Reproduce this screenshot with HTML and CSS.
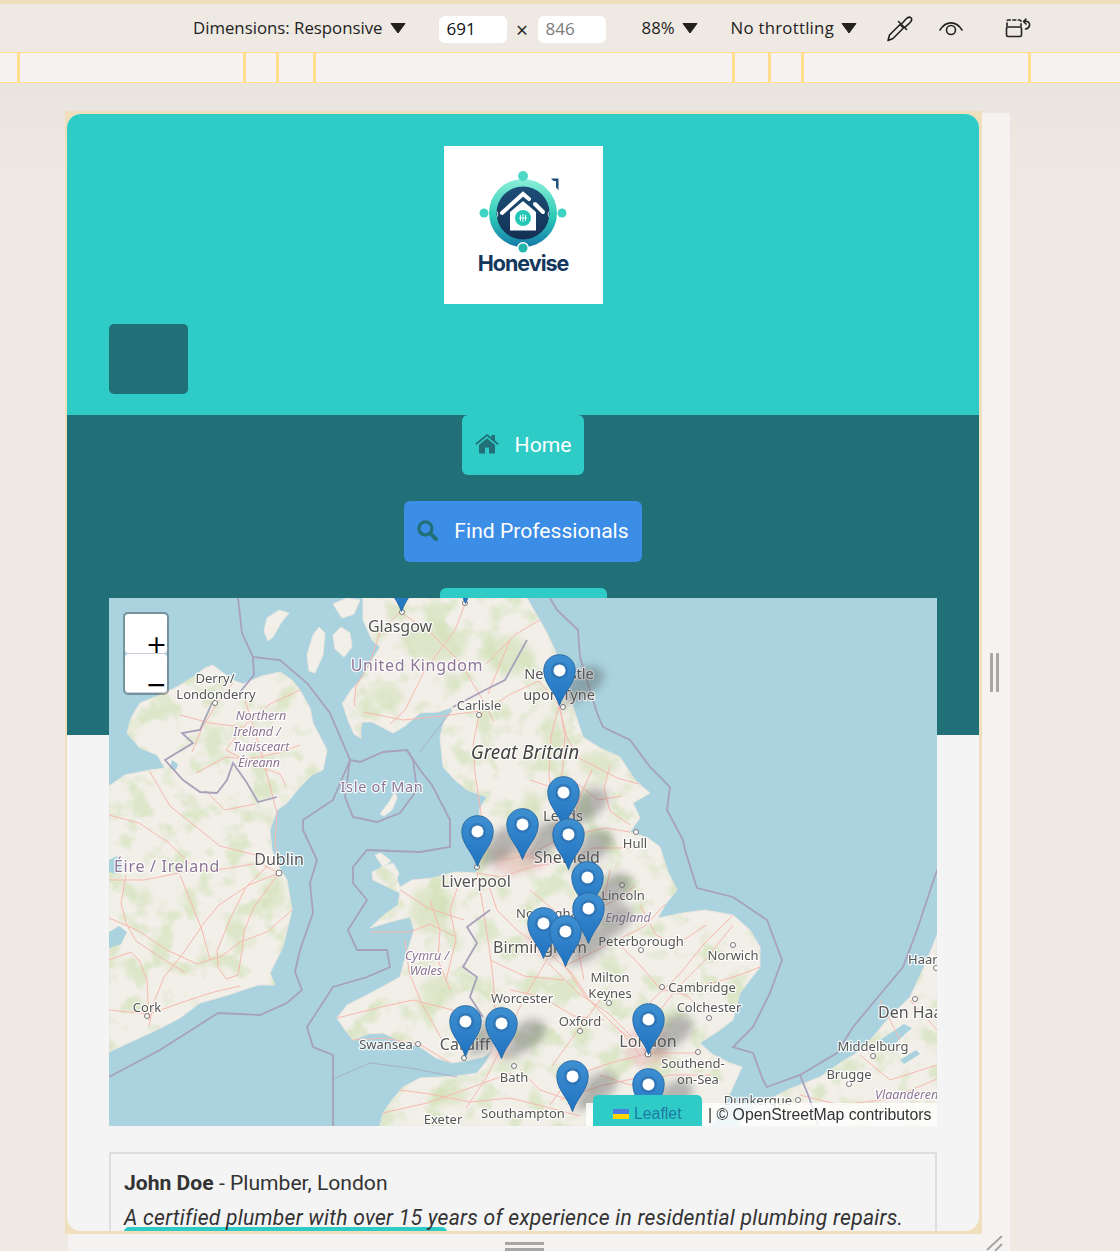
FILE: index.html
```html
<!DOCTYPE html>
<html lang="en">
<head>
  <meta charset="UTF-8">
  <title>Honevise - Find Professionals</title>
  <link rel="stylesheet" href="styles.css">
</head>
<body>

  <!-- Device toolbar -->
  <div class="toolbar">
    <span class="tool-label tool-dimensions">Dimensions: Responsive</span>
    <svg class="caret" viewBox="0 0 16 12"><path d="M1 1.500h14L8 11z"/></svg>
    <span class="size-box size-width">691</span>
    <span class="times">×</span>
    <span class="size-box size-height">846</span>
    <span class="tool-label tool-zoom">88%</span>
    <svg class="caret" viewBox="0 0 16 12"><path d="M1 1.500h14L8 11z"/></svg>
    <span class="tool-label tool-throttle">No throttling</span>
    <svg class="caret" viewBox="0 0 16 12"><path d="M1 1.500h14L8 11z"/></svg>
    <svg class="tool-icon icon-dropper" viewBox="0 0 27 28">
      <path d="M2 26.500l1.500-5.500L14 10.500l3.500 3.500L7 24.500z"/>
      <path d="M12.500 7.500l8 8M15.500 10l4.500-5c1.500-1.500 3.500-2.500 5-1.200 1.300 1.500.3 3.500-1.200 5l-5 4.500"/>
    </svg>
    <svg class="tool-icon icon-eye" viewBox="0 0 24 18">
      <path d="M1 11C7 1.500 17 1.500 23 11"/>
      <circle cx="12" cy="11" r="4.500"/>
    </svg>
    <svg class="tool-icon icon-rotate" viewBox="0 0 26 20">
      <path d="M2 8V3.500c0-1 .6-1.500 1.500-1.500h11c1 0 1.500.6 1.500 1.500V8" stroke-dasharray="3 2.500"/>
      <rect x="1.500" y="9" width="15" height="9.500" rx="1.500"/>
      <path d="M19 3.500c4-1 6 1.500 5.500 4-.4 2-2 3.200-4 3.500M21 1l-2.500 2.500L21 6"/>
    </svg>
  </div>

  <!-- Media query ruler -->
  <div class="ruler">
    <span class="ruler-cell cell-a"></span>
    <span class="ruler-cell cell-b"></span>
    <span class="ruler-cell cell-c"></span>
    <span class="ruler-cell cell-d"></span>
    <span class="ruler-cell cell-e"></span>
    <span class="ruler-cell cell-f"></span>
    <span class="ruler-cell cell-g"></span>
    <span class="ruler-cell cell-h"></span>
    <span class="ruler-cell cell-rest"></span>
  </div>

  <div class="stage">
    <div class="device-frame">
      <div class="site">

        <header class="site-header">
          <div class="logo">
            <svg class="logo-mark" viewBox="0 0 100 90">
              <defs>
                <linearGradient id="ringGrad" x1="0" y1="0" x2="0" y2="1">
                  <stop offset="0" stop-color="#8ceed8"/>
                  <stop offset=".55" stop-color="#2ccbb8"/>
                  <stop offset="1" stop-color="#1678a8"/>
                </linearGradient>
                <linearGradient id="coreGrad" x1="0" y1="0" x2="0" y2="1">
                  <stop offset="0" stop-color="#1d4f78"/>
                  <stop offset="1" stop-color="#142f52"/>
                </linearGradient>
              </defs>
              <circle cx="50" cy="43" r="34" fill="url(#ringGrad)"/>
              <circle cx="50" cy="43" r="26.500" fill="url(#coreGrad)"/>
              <path d="M23 41c3 1 3 5 0 7 2-3 2-5 0-7zM77 41c-3 1-3 5 0 7-2-3-2-5 0-7z" fill="#ffffff"/>
              <circle cx="50" cy="6" r="5" fill="#4fd8c6"/>
              <circle cx="11" cy="43" r="4.500" fill="#3ed3c2"/>
              <circle cx="89" cy="43" r="4.500" fill="#3ed3c2"/>
              <circle cx="50" cy="78" r="6" fill="#ffffff"/>
              <circle cx="50" cy="78" r="4.500" fill="#22b6ae"/>
              <path d="M78 8.500h7.500V20L83 17.500V11h-2.500z" fill="#1d4f78"/>
              <path d="M29 43L50 24l6 5" fill="none" stroke="#ffffff" stroke-width="4" stroke-linecap="round"/>
              <path d="M62 34l8 8" fill="none" stroke="#ffffff" stroke-width="4" stroke-linecap="round"/>
              <path d="M50 31l13 11v18.500H37V42z" fill="#ffffff"/>
              <circle cx="50" cy="48" r="8" fill="#25c8b6"/>
              <path d="M46 48h8M50 44v8M47.500 45v6M52.500 45v6" stroke="#ffffff" stroke-width=".9"/>
            </svg>
            <span class="logo-text">Honevise</span>
          </div>
          <button class="burger" type="button" aria-label="Menu"></button>
        </header>

        <nav class="site-nav">
          <a class="nav-btn nav-home" href="#">
            <svg class="nav-icon icon-home" viewBox="0 0 24 20"><path d="M12 4.300L4 11v7.500c0 .6.400 1 1 1h5v-6h4v6h5c.6 0 1-.4 1-1V11zM23.700 9.500L20 6.400V1h-3.500v2.500L12 0 .3 9.500l1.100 1.400L12 2.200l10.600 8.700z"/></svg>
            <span>Home</span>
          </a>
          <a class="nav-btn nav-find" href="#">
            <svg class="nav-icon icon-search" viewBox="0 0 22 22"><circle cx="8.800" cy="8.800" r="6.800" fill="none" stroke-width="3.400"/><path d="M14 14l6 6" stroke-width="4" stroke-linecap="round"/></svg>
            <span>Find Professionals</span>
          </a>
          <a class="nav-btn nav-third" href="#"></a>
        </nav>

        <main class="content">
          <div class="map">
            <svg class="map-canvas" viewBox="109 598 828 528" preserveAspectRatio="none">
              <defs>
                <linearGradient id="pinGrad" x1="0" y1="0" x2="0" y2="1">
                  <stop offset="0" stop-color="#3f90d2"/>
                  <stop offset="1" stop-color="#1f72c0"/>
                </linearGradient>
                <symbol id="pin" viewBox="0 0 33 52" overflow="visible">
                  <path d="M16.500 51.500C11 36 1 30 .8 16.500.8 7.500 7.500.7 16.500.7s15.700 6.800 15.700 15.800C32 30 22 36 16.500 51.500z" fill="url(#pinGrad)" stroke="#2b6ba3"/>
                  <circle cx="16.500" cy="16.500" r="8.500" fill="#2a6aa5" opacity=".55"/>
                  <circle cx="16.500" cy="16.500" r="6" fill="#ffffff"/>
                </symbol>
                <symbol id="pinShadow" viewBox="0 0 60 52" overflow="visible">
                  <path d="M2 52C6 40 10 26 18 18c8-8 22-8 26 0 4 10-8 20-18 26-8 4-16 6-24 8z" fill="#5a5c5c"/>
                </symbol>
                <path id="landIreland" d="M109 786L125 775 150 770 165 768 157 755 140 748 127 733 131 718 140 703 160 695 177 687 193 677 205 668 213 665 222 672 233 680 243 684 262 676 280 672 292 680 300 690 310 708 313 723 327 750 323 770 312 775 300 787 287 803 277 810 270 830 272 850 278 865 287 880 292 910 283 947 270 973 275 985 258 985 243 990 225 996 200 1003 180 1018 163 1027 135 1040 109 1052z"/>
                <path id="landBritain" d="M363 598L363 620 372 640 380 647 372 660 363 677 351 690 343 703 350 722 360 737 362 722 372 722 393 733 405 726 420 713 438 712 453 707 444 722 440 737 443 767 455 780 467 790 487 797 480 808 478 825 482 840 476 855 477 873 455 872 433 878 412 880 400 887 395 874 383 867 372 872 373 880 388 887 400 893 398 905 385 914 370 928 390 922 410 917 414 930 410 943 404 962 400 977 380 988 363 997 347 1005 337 1018 345 1030 353 1040 368 1034 383 1033 400 1041 420 1047 436 1058 453 1063 470 1060 483 1057 493 1050 486 1062 477 1073 458 1076 440 1077 420 1078 403 1087 392 1100 383 1113 380 1126 710 1126 727 1100 742 1067 730 1063 712 1054 700 1043 720 1030 733 1020 740 993 760 967 760 947 750 930 733 915 705 910 683 913 658 918 665 905 677 890 668 872 660 847 648 838 630 832 640 818 633 803 650 793 635 780 620 757 600 748 583 737 573 707 562 675 555 650 547 633 535 612 527 598z"/>
                <path id="landLowlands" d="M937 935L925 965 910 997 887 1020 873 1037 858 1052 840 1063 820 1077 787 1090 763 1103 745 1115 738 1126 937 1126z"/>
                <clipPath id="landClip">
                  <use href="#landIreland"/>
                  <use href="#landBritain"/>
                  <use href="#landLowlands"/>
                </clipPath>
                <filter id="mottle" x="0" y="0" width="100%" height="100%" color-interpolation-filters="sRGB">
                  <feTurbulence type="fractalNoise" baseFrequency=".04" numOctaves="3" seed="7"/>
                  <feColorMatrix values="0 0 0 0 .78  0 0 0 0 .87  0 0 0 0 .66  5 0 0 0 -2.500"/>
                </filter>
              </defs>

              <g class="tiles">
                <!-- sea -->
                <rect class="sea" x="109" y="598" width="828" height="528"/>

                <!-- land -->
                <use class="land" href="#landIreland"/>
                <use class="land" href="#landBritain"/>
                <use class="land" href="#landLowlands"/>
                <path class="land" d="M381 867l12-4 6 10-4 12-12-3-6-8zM383 867l-8-12 6-2 10 8z"/>
                <path class="land" d="M380 814l9-12 6-10 2 6-5 12-8 6z"/>
                <path class="land" d="M267 618l12-8 10 3-8 10-8 14-5 4-4-10zM307 655l6-20 6-8 6 6-2 22-8 18-6-2zM333 635l8-8 9 6 2 14-8 10-9-8zM333 604l14-6 13 2-6 14-12 4-4-6z"/>
                <path class="land" d="M342 702l10 6 8 14 1 16-7-4-6-14z"/>

                <!-- parks and hills -->
                <rect class="mottle" x="109" y="598" width="828" height="528" filter="url(#mottle)" clip-path="url(#landClip)"/>
                <g class="green">
                  <path d="M400 630l40-8 30 14-8 22-30 4-26-10zM485 640l30-6 22 20-18 22-28-6z"/>
                  <path d="M370 690l22-8 14 16-16 12-16-6zM445 670l14 8-2 16-12-4z"/>
                  <path d="M545 715l16 6 2 26-14 8-8-22zM580 755l24-4 16 14-14 14-26-8z"/>
                  <path d="M525 790l14 4 4 26-12 2-8-14zM518 910l14-8 2 14-14 6z"/>
                  <path d="M415 890l24-8 18 20-12 28-22 4-14-18zM420 985l22-12 16 14-12 18-20 2z"/>
                  <path d="M262 885l20-8 4 26-16 8-10-10zM133 895l14-8 6 12-12 10z"/>
                  <path d="M430 1090l24-6 16 8-8 12-24 2zM840 1105l18-6 8 10-18 4z"/>
                </g>

                <!-- lakes -->
                <path class="lake" d="M109 860l8-4 6 10-6 8-8-2zM109 932l10-6 8 6-6 12-12 4zM172 760l6 4-2 6-6-2zM880 1040l24-16 8 4-20 18zM900 1060l16-10 4 4-16 10z"/>

                <!-- roads -->
                <g class="roads">
                  <path d="M109 880h35l40-8 40-3 35-6 20 10M279 873l-30 12-30 20-15 18-22 32-18 22-10 25-5 24M279 873l-25 34-10 24-2 20-4 24-12 4-8-12-1-16 14-34 15-30 33-32M292 910l-25 22-27 10-18 14-25 8-30-14-30-20-28-12-10 4M109 960l22-8 8 8 8 20 2 40M109 1010l40 4 40-14 25-8 26-6M126 875l-5 28 5 20 10 18 30 20 20 12M180 875l10 25 12 30 8 30"/>
                  <path d="M233 683l-16 20-15 25-10 24M300 690l-30 14-24 20-20 26 26 14 28 10 6 12M300 745l-22 8-30 6-22-2-30 16M245 700l14 45 8 30 10 38-2 30 3 20M180 715l30 8 32 4M109 815l30 8 30 20 30 30M150 772l20 34 30 24 20 16 40 10M205 790l20 20 30-6"/>
                  <path d="M400 612l-20 20-10 30-14 24-2 20M400 612l30 20 30 30 24 40 10 20M465 604l-10 26-30 40-20 40-15 14M363 712l40 8 40-4 36-5M479 715l-6 30 2 28 6 40 2 20M479 715l30-20 30-14 20 24 6 30-2 30-4 25M559 706l-8 30-2 40 6 40M559 706l8 32 12 20 38 20 22 6M500 860l26-4 40-20 40-8 24 4M633 848l-40 0-30 14-45-6M510 640l-10 24-12 30M540 620l-24 14-30 30M592 770l-12 26-6 24M610 765l-6 24 6 22 20 14M530 780l24 8 24-4 20 16 24-4"/>
                  <path d="M477 873l24 4 30-10 35-6M487 880l10 30 20 20 30 22 24 20 20 30 30 30 20 24M477 873l6 34 6 40 4 30 2 30 6 24M548 958l-24 40-18 40-20 40-20 30M565 966l20 30 30 30 32 27M565 966l40-20 40-20 20-22M587 913l-20 45M587 913l36-16 12-12M700 1053l-50 0-40 10-40 14-20 28M648 1053l-40-40-30-20-30-30M648 1053l10-40 20-26 30-30 25-32M733 915l-30 30-24 30-28 26-3 50M760 967l-26 10-30 8-26 8M620 945l20 20 20 24 26 6 20 18M600 1000l-22 30-26 36M510 990l30 6 34 20 30 4M490 960l34 16 40 4M530 890l24 20 24 40 6 30M610 870l-6 30-18 40M640 905l16 30 20 10 30-20M600 1075l30 10 40-10 40 0M560 1100l40-14 46-10M520 1070l20 20 30 10"/>
                  <path d="M400 890l28 18 36 12M370 932l40 0 20-8 24 12M337 1018l40-10 36-8 40 10 30 6M353 1040l30-2 36 6 30 18M405 940l4 32 12 30 20 36M400 1090l30 4 40 8 40-4 40 10 30 8M383 1113l44-10 40-14 44-16M430 900l10 30-2 30 12 30M460 880l-10 30 6 30-10 40"/>
                  <path d="M880 1000l20 40M800 1095l40 10 50-6 47-20M860 1055l30 25 47-15M910 1000l27 30"/>
                </g>

                <!-- urban patches -->
                <path class="urban" d="M495 848l30 0 24 8-6 12-30 8-20-6zM530 925l30 0 8 24-20 10-22-10zM630 1030l34 0 6 30-30 8-16-14zM555 820l22 6-4 18-20 0zM490 1048l18 0 2 10-20 2z"/>

                <!-- borders and sea limits -->
                <g class="limits">
                  <path d="M238 598L242 633 253 657 280 660 307 683 330 713 350 760 360 762 383 752 407 750 420 770 432 785 450 820 450 847 420 852 392 851 367 850 353 867 353 883 367 900 348 930 357 950 387 950 390 967 367 977 333 987 307 1027 313 1047 333 1055 333 1126"/>
                  <path d="M350 760L345 797 353 817 377 822 400 813 417 790 413 760 407 750"/>
                  <path d="M350 760L333 800 303 820 303 830 317 860 310 883 313 913 300 950 295 972 302 990 287 1003 260 1015 218 1013 160 1050 109 1077"/>
                  <path d="M253 657L254 675 240 692"/>
                  <path d="M550 598L557 610 578 630 580 657 597 713 603 727 630 740 650 767 670 787 667 810 683 840 685 850 697 888 733 897 767 920 782 960 770 993 753 1027 733 1047 753 1053 763 1080 767 1087 800 1075 810 1100 818 1126"/>
                  <path d="M937 870L917 930 903 967 878 997 853 1027 837 1053 800 1075"/>
                  <path d="M212 703L200 730 182 733 193 743 165 760 183 780 200 792 217 793 227 780 233 763 247 783 258 802 277 797"/>
                  <path d="M490 910L467 927 477 943 463 967 477 977 470 997 483 1017"/>
                  <path class="thin" d="M333 1079L370 1063 410 1068 457 1077M420 752l32-42"/>
                  <path d="M527 640L505 680 485 690 453 707"/>
                </g>

                <!-- place dots -->
                <g class="dots">
                  <circle cx="215" cy="703" r="2.500"/><circle cx="479" cy="715" r="2.500"/><circle cx="636" cy="832" r="2.500"/>
                  <circle cx="622" cy="885" r="2.500"/><circle cx="641" cy="950" r="2.500"/><circle cx="733" cy="945" r="2.500"/>
                  <circle cx="662" cy="987" r="2.500"/><circle cx="709" cy="1018" r="2.500"/><circle cx="609" cy="1003" r="2.500"/>
                  <circle cx="580" cy="1031" r="2.500"/><circle cx="698" cy="1052" r="2.500"/><circle cx="147" cy="1016" r="2.500"/>
                  <circle cx="418" cy="1044" r="2.500"/><circle cx="514" cy="1066" r="2.500"/><circle cx="915" cy="999" r="2.500"/>
                  <circle cx="873" cy="1056" r="2.500"/><circle cx="849" cy="1084" r="2.500"/><circle cx="798" cy="1100" r="2.500"/>
                  <circle cx="279" cy="873" r="3"/><circle cx="648" cy="1054" r="3"/><circle cx="477" cy="867" r="2.500"/>
                  <circle cx="563" cy="707" r="2.500"/><circle cx="402" cy="612" r="2.500"/><circle cx="465" cy="603" r="2.500"/>
                  <circle cx="936" cy="968" r="2.500"/><circle cx="464" cy="1058" r="2.500"/>
                </g>

                <!-- place labels -->
                <g class="labels">
                  <text class="city big" x="400" y="632">Glasgow</text>
                  <text class="region big" x="417" y="671">United Kingdom</text>
                  <text class="city" x="215" y="683">Derry/</text>
                  <text class="city" x="216" y="699">Londonderry</text>
                  <text class="region-it" x="261" y="720">Northern</text>
                  <text class="region-it" x="257" y="736">Ireland /</text>
                  <text class="region-it" x="261" y="751">Tuaisceart</text>
                  <text class="region-it" x="259" y="767">Éireann</text>
                  <text class="city mid" x="559" y="679">Newcastle</text>
                  <text class="city mid" x="559" y="700">upon Tyne</text>
                  <text class="city" x="479" y="710">Carlisle</text>
                  <text class="nation" x="525" y="759">Great Britain</text>
                  <text class="region mid" x="382" y="792">Isle of Man</text>
                  <text class="city big" x="279" y="865">Dublin</text>
                  <text class="region big" x="167" y="872">Éire / Ireland</text>
                  <text class="city mid" x="563" y="821">Leeds</text>
                  <text class="city" x="635" y="848">Hull</text>
                  <text class="city big" x="567" y="863">Sheffield</text>
                  <text class="city big" x="476" y="887">Liverpool</text>
                  <text class="city" x="623" y="900">Lincoln</text>
                  <text class="region-it" x="628" y="922">England</text>
                  <text class="city" x="553" y="918">Nottingham</text>
                  <text class="city" x="641" y="946">Peterborough</text>
                  <text class="city big" x="540" y="953">Birmingham</text>
                  <text class="city" x="733" y="960">Norwich</text>
                  <text class="city start" x="908" y="964">Haarlem</text>
                  <text class="region-it" x="427" y="960">Cymru /</text>
                  <text class="region-it" x="426" y="975">Wales</text>
                  <text class="city" x="147" y="1012">Cork</text>
                  <text class="city" x="610" y="982">Milton</text>
                  <text class="city" x="610" y="998">Keynes</text>
                  <text class="city" x="702" y="992">Cambridge</text>
                  <text class="city" x="709" y="1012">Colchester</text>
                  <text class="city" x="522" y="1003">Worcester</text>
                  <text class="city" x="580" y="1026">Oxford</text>
                  <text class="city big start" x="878" y="1018">Den Haag</text>
                  <text class="city" x="873" y="1051">Middelburg</text>
                  <text class="city" x="386" y="1049">Swansea</text>
                  <text class="city big" x="465" y="1050">Cardiff</text>
                  <text class="city big" x="648" y="1047">London</text>
                  <text class="city" x="693" y="1068">Southend-</text>
                  <text class="city" x="698" y="1084">on-Sea</text>
                  <text class="city" x="514" y="1082">Bath</text>
                  <text class="city" x="849" y="1079">Brugge</text>
                  <text class="region-it start" x="875" y="1099">Vlaanderen</text>
                  <text class="city" x="758" y="1105">Dunkerque</text>
                  <text class="city" x="443" y="1124">Exeter</text>
                  <text class="city" x="523" y="1118">Southampton</text>
                </g>
              </g>

              <!-- marker shadows -->
              <g class="pin-shadows">
                <use href="#pinShadow" x="559" y="654" width="60" height="52"/>
                <use href="#pinShadow" x="563" y="776" width="60" height="52"/>
                <use href="#pinShadow" x="568" y="818" width="60" height="52"/>
                <use href="#pinShadow" x="477" y="815" width="60" height="52"/>
                <use href="#pinShadow" x="522" y="808" width="60" height="52"/>
                <use href="#pinShadow" x="587" y="861" width="60" height="52"/>
                <use href="#pinShadow" x="588" y="892" width="60" height="52"/>
                <use href="#pinShadow" x="543" y="907" width="60" height="52"/>
                <use href="#pinShadow" x="565" y="915" width="60" height="52"/>
                <use href="#pinShadow" x="465" y="1005" width="60" height="52"/>
                <use href="#pinShadow" x="501" y="1007" width="60" height="52"/>
                <use href="#pinShadow" x="648" y="1003" width="60" height="52"/>
                <use href="#pinShadow" x="572" y="1060" width="60" height="52"/>
                <use href="#pinShadow" x="648" y="1068" width="60" height="52"/>
              </g>

              <!-- markers -->
              <use href="#pin" x="385" y="560" width="33" height="52"/>
              <use href="#pin" x="449" y="552" width="33" height="52"/>
              <use href="#pin" x="543" y="654" width="33" height="52"/>
              <use href="#pin" x="547" y="776" width="33" height="52"/>
              <use href="#pin" x="461" y="815" width="33" height="52"/>
              <use href="#pin" x="506" y="808" width="33" height="52"/>
              <use href="#pin" x="552" y="818" width="33" height="52"/>
              <use href="#pin" x="571" y="861" width="33" height="52"/>
              <use href="#pin" x="572" y="892" width="33" height="52"/>
              <use href="#pin" x="527" y="907" width="33" height="52"/>
              <use href="#pin" x="549" y="915" width="33" height="52"/>
              <use href="#pin" x="449" y="1005" width="33" height="52"/>
              <use href="#pin" x="485" y="1007" width="33" height="52"/>
              <use href="#pin" x="632" y="1003" width="33" height="52"/>
              <use href="#pin" x="556" y="1060" width="33" height="52"/>
              <use href="#pin" x="632" y="1068" width="33" height="52"/>
            </svg>

            <div class="zoom-control">
              <a class="zoom-btn" href="#">+</a>
              <a class="zoom-btn" href="#">−</a>
            </div>

            <div class="attribution">
              <a class="leaflet-link" href="#">
                <svg class="flag" viewBox="0 0 16 10"><rect width="16" height="5" fill="#4c7be1"/><rect y="5" width="16" height="5" fill="#ffd500"/></svg>
                Leaflet
              </a>
              <span class="attr-text">| © OpenStreetMap contributors</span>
            </div>
          </div>

          <div class="pro-card">
            <p class="pro-name"><strong>John Doe</strong> - Plumber, London</p>
            <p class="pro-bio"><em>A certified plumber with over 15 years of experience in residential plumbing repairs.</em></p>
            <a class="pro-action" href="#"></a>
          </div>
        </main>

      </div>
    </div>

    <div class="handle-right">
      <span class="grip-v"></span>
      <span class="grip-v"></span>
      <svg class="grip-corner" viewBox="0 0 18 16"><path d="M1 15L16 1M9 16l7-7"/></svg>
    </div>

    <div class="handle-bottom">
      <span class="grip-h"></span>
      <span class="grip-h"></span>
    </div>
  </div>

</body>
</html>
```

FILE: styles.css
```css
* {
  box-sizing: border-box;
}

body {
  margin: 0;
  height: 1251px;
  overflow: hidden;
  background: #efe9e3;
  font-family: Roboto, sans-serif;
  border-top: 4px solid #eedfbd;
}

/* Toolbar */

.toolbar {
  display: flex;
  align-items: center;
  height: 48px;
  padding-left: 193px;
  padding-bottom: 1px;
}

.tool-label {
  font-family: 'Open Sans', sans-serif;
  font-size: 16.800px;
  color: #222;
  white-space: nowrap;
}

.caret {
  width: 16px;
  height: 12px;
  margin-left: 7px;
  fill: #231f1a;
  stroke: #231f1a;
  stroke-linejoin: round;
}

.size-box {
  width: 68px;
  height: 27px;
  margin-top: 3px;
  padding-left: 8px;
  background: #fff;
  border-radius: 6px;
  font-family: 'Open Sans', sans-serif;
  font-size: 17px;
  line-height: 26px;
  color: #111;
}

.size-width {
  margin-left: 33px;
}

.size-height {
  color: #7b7b7b;
}

.times {
  width: 31px;
  padding-top: 6px;
  text-align: center;
  font-family: 'Open Sans', sans-serif;
  font-size: 21px;
  line-height: 1;
  color: #222;
}

.tool-zoom {
  margin-left: 36px;
}

.tool-throttle {
  margin-left: 33px;
  letter-spacing: 0.25px;
}

.tool-icon {
  fill: none;
  stroke: #222;
  stroke-width: 1.6;
  stroke-linecap: round;
  stroke-linejoin: round;
}

.icon-dropper {
  width: 27px;
  height: 28px;
  margin-left: 29px;
}

.icon-eye {
  width: 24px;
  height: 18px;
  margin-left: 26px;
}

.icon-rotate {
  width: 26px;
  height: 20px;
  margin-left: 42px;
}

/* Ruler */

.ruler {
  display: flex;
  height: 31px;
  background: #f6f2f1;
  border-top: 1px solid #ffdc8e;
  border-bottom: 1px solid #ffdc8e;
}

.ruler-cell {
  border-right: 3px solid #ffdc8e;
}

.cell-a { width: 20px; }
.cell-b { width: 226px; }
.cell-c { width: 33px; }
.cell-d { width: 37px; }
.cell-e { width: 419px; }
.cell-f { width: 36px; }
.cell-g { width: 33px; }
.cell-h { width: 227px; }

.cell-rest {
  flex: 1;
  border-right: none;
}

/* Responsive stage */

.stage {
  display: grid;
  grid-template-columns: 917px 28px;
  grid-template-rows: 1123px 17px;
  height: 1168px;
  padding: 28px 0 0 65px;
  background: linear-gradient(to bottom, #e9e5de, #efe9e3 120px);
}

.device-frame {
  overflow: hidden;
  background: #efdfbd;
  border: solid #efdfbd;
  border-width: 3px 3px 3px 2px;
}

.handle-right {
  position: relative;
  grid-column: 2;
  grid-row: 1 / span 2;
  display: flex;
  justify-content: center;
  gap: 3px;
  margin-top: 2px;
  padding: 540px 3px 0 0;
  background: #f6f2f1;
}

.grip-v {
  width: 3px;
  height: 39px;
  background: #a8a5a2;
  border-radius: 1px;
}

.grip-corner {
  position: absolute;
  left: 4px;
  bottom: 0;
  width: 18px;
  height: 16px;
  fill: none;
  stroke: #a8a5a2;
  stroke-width: 2;
}

.handle-bottom {
  grid-column: 1;
  grid-row: 2;
  display: flex;
  flex-direction: column;
  gap: 3px;
  margin-left: 3px;
  padding: 8px 0 0 437px;
  overflow: hidden;
  background: #f6f2f1;
}

.grip-h {
  display: block;
  flex: none;
  width: 39px;
  height: 3px;
  background: #a8a5a2;
}

/* Site */

.site {
  height: 1117px;
  overflow: hidden;
  background: #f4f4f4;
  border-radius: 14px;
}

.site-header {
  height: 301px;
  padding: 32px 42px 0;
  background: #2fcbc6;
}

.logo {
  display: flex;
  flex-direction: column;
  align-items: center;
  width: 159px;
  height: 158px;
  margin: 0 auto 20px;
  padding-top: 24px;
  background: #fff;
}

.logo-mark {
  flex: none;
  width: 100px;
  height: 90px;
}

.logo-text {
  margin-top: -10px;
  font-family: Inter, sans-serif;
  font-size: 21.500px;
  font-weight: 700;
  letter-spacing: -1px;
  line-height: 26px;
  color: #14375e;
}

.burger {
  display: block;
  width: 79px;
  height: 70px;
  padding: 0;
  background: #216f77;
  border: none;
  border-radius: 5px;
}

.site-nav {
  display: flex;
  flex-direction: column;
  align-items: center;
  gap: 26px;
  height: 320px;
  overflow: hidden;
  background: #216f77;
}

.nav-btn {
  display: flex;
  align-items: center;
  gap: 16px;
  flex: none;
  height: 60px;
  padding: 0 13px 2px;
  background: #2fcbc6;
  border-radius: 6px;
  font-size: 21.120px;
  color: #fff;
  text-decoration: none;
}

.nav-find {
  height: 61px;
  background: #3b8de5;
}

.nav-third {
  width: 167px;
}

.nav-icon {
  flex: none;
  fill: #216f77;
  stroke: #216f77;
  stroke-width: 0;
}

.icon-home {
  width: 24px;
  height: 20px;
}

.icon-search {
  width: 21px;
  height: 21px;
}

/* Map */

.content {
  position: relative;
  margin-top: -137px;
  padding: 0 42px;
}

.map {
  position: relative;
  height: 528px;
  overflow: hidden;
  background: #aad3df;
}

.map-canvas {
  display: block;
  width: 100%;
  height: 100%;
}

.tiles {
  filter: blur(0.5px);
}

.sea,
.lake {
  fill: #aad3df;
}

.land {
  fill: #f2efe9;
  stroke: #e9e6df;
  stroke-width: 1;
}

.mottle {
  opacity: 0.5;
}

.green {
  fill: #cfdfb2;
  opacity: 0.55;
  filter: blur(3px);
}

.roads {
  fill: none;
  stroke: #f8b9ae;
  stroke-width: 1;
}

.urban {
  fill: #e6b6b4;
  opacity: 0.5;
  filter: blur(3px);
}

.limits {
  fill: none;
  stroke: #a7a1bb;
  stroke-width: 1.8;
}

.limits .thin {
  stroke-width: 1;
  opacity: 0.7;
}

.dots circle {
  fill: #fff;
  stroke: #777;
  stroke-width: 1;
}

.labels text {
  font-family: 'Noto Sans', sans-serif;
  text-anchor: middle;
  paint-order: stroke;
  stroke: rgba(255, 255, 255, 0.85);
  stroke-width: 2.5px;
  stroke-linejoin: round;
}

.labels .start {
  text-anchor: start;
}

.labels .city {
  font-size: 13px;
  fill: #555;
}

.labels .mid {
  font-size: 14.500px;
}

.labels .big {
  font-size: 16px;
}

.labels .region {
  fill: #8c7596;
  letter-spacing: 0.7px;
}

.labels .region-it {
  font-size: 12.500px;
  font-style: italic;
  fill: #8c7596;
}

.labels .nation {
  font-size: 19px;
  font-style: italic;
  fill: #444;
}

.pin-shadows {
  opacity: 0.4;
  filter: blur(4px);
}

.zoom-control {
  position: absolute;
  top: 14px;
  left: 14px;
  width: 46px;
  height: 83px;
  border: 2px solid rgba(0, 0, 0, 0.3);
  border-radius: 5px;
  background-clip: padding-box;
}

.zoom-btn {
  display: block;
  height: 39.500px;
  background: #fff;
  border-radius: 4px;
  border-bottom: 1px solid #ccd;
  font-family: 'DejaVu Sans', sans-serif;
  font-size: 25px;
  line-height: 62px;
  text-align: right;
  color: #000;
  text-decoration: none;
  overflow: hidden;
}

.attribution {
  position: absolute;
  right: 0;
  bottom: 0;
  display: flex;
  align-items: flex-end;
  width: 351px;
  height: 31px;
  padding-left: 7px;
  background: linear-gradient(to bottom, transparent 8px, rgba(255, 255, 255, 0.82) 8px);
  font-family: 'Liberation Sans', sans-serif;
  font-size: 15.840px;
  color: #333;
}

.leaflet-link {
  display: flex;
  align-items: center;
  gap: 5px;
  width: 109px;
  height: 31px;
  padding: 7px 0 0 20px;
  background: #2fcbc6;
  border-radius: 5px 5px 0 0;
  color: #1f78a4;
  text-decoration: none;
}

.flag {
  width: 16px;
  height: 10px;
}

.attr-text {
  margin: 0 0 2px 6px;
  white-space: nowrap;
}

/* Professional card */

.pro-card {
  height: 200px;
  margin-top: 26px;
  padding: 14px 13px;
  border: 2px solid #dedede;
}

.pro-name {
  margin: 0;
  font-size: 21.120px;
  line-height: 30px;
  color: #333;
}

.pro-bio {
  margin: 10px 0 0;
  font-size: 21.120px;
  letter-spacing: 0.26px;
  line-height: 20px;
  color: #333;
}

.pro-action {
  display: block;
  width: 323px;
  height: 40px;
  margin-top: -1px;
  background: #2fcbc6;
  border-radius: 5px;
}
```
